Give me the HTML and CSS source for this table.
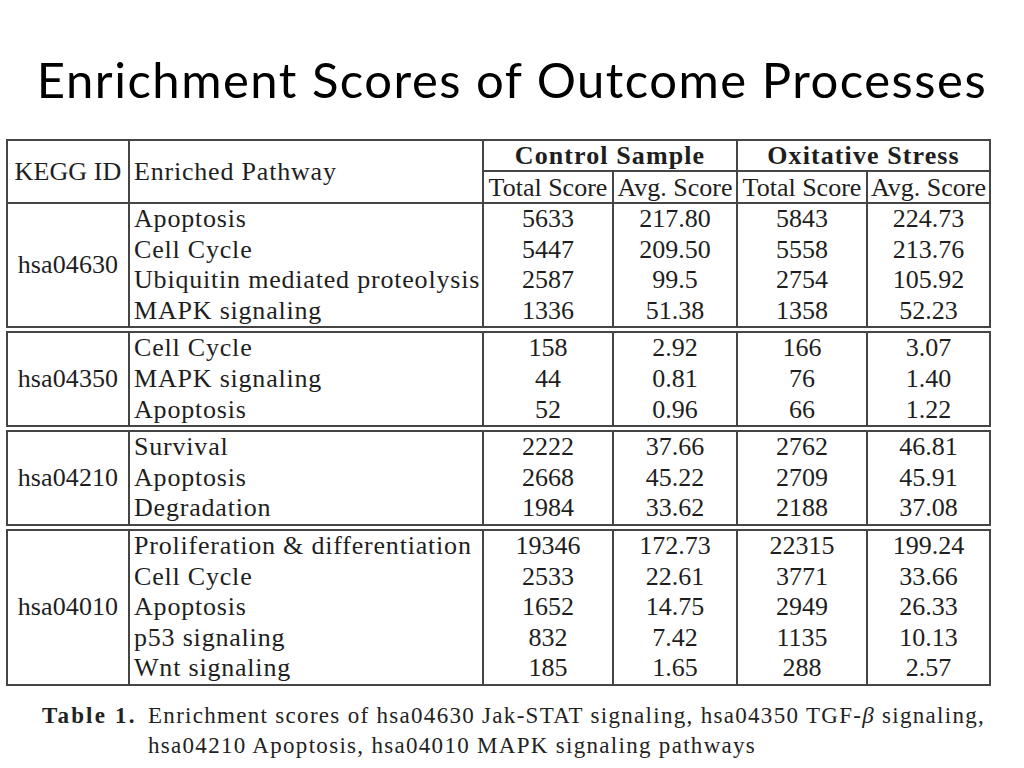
FILE: index.html
```html
<!DOCTYPE html>
<html lang="en">
<head>
<meta charset="utf-8">
<title>Enrichment Scores of Outcome Processes</title>
<link rel="stylesheet" href="styles.css">
</head>
<body>
<div class="slide">
  <h1 class="title">Enrichment Scores of Outcome Processes</h1>
  <div class="tables">
    <table class="box">
      <colgroup><col class="c1"><col class="c2"><col class="c3"><col class="c4"><col class="c5"><col class="c6"></colgroup>
      <thead>
        <tr class="hr">
          <th rowspan="2" class="id">KEGG ID</th>
          <th rowspan="2" class="path">Enriched Pathway</th>
          <th colspan="2" class="grp">Control Sample</th>
          <th colspan="2" class="grp">Oxitative Stress</th>
        </tr>
        <tr class="hr">
          <th class="sub">Total Score</th><th class="sub">Avg. Score</th><th class="sub">Total Score</th><th class="sub">Avg. Score</th>
        </tr>
      </thead>
      <tbody>
        <tr><td rowspan="4" class="id">hsa04630</td><td class="path">Apoptosis</td><td>5633</td><td>217.80</td><td>5843</td><td>224.73</td></tr>
        <tr><td class="path">Cell Cycle</td><td>5447</td><td>209.50</td><td>5558</td><td>213.76</td></tr>
        <tr><td class="path">Ubiquitin mediated proteolysis</td><td>2587</td><td>99.5</td><td>2754</td><td>105.92</td></tr>
        <tr><td class="path">MAPK signaling</td><td>1336</td><td>51.38</td><td>1358</td><td>52.23</td></tr>
      </tbody>
    </table>
    <table class="box">
      <colgroup><col class="c1"><col class="c2"><col class="c3"><col class="c4"><col class="c5"><col class="c6"></colgroup>
      <tbody>
        <tr><td rowspan="3" class="id">hsa04350</td><td class="path">Cell Cycle</td><td>158</td><td>2.92</td><td>166</td><td>3.07</td></tr>
        <tr><td class="path">MAPK signaling</td><td>44</td><td>0.81</td><td>76</td><td>1.40</td></tr>
        <tr><td class="path">Apoptosis</td><td>52</td><td>0.96</td><td>66</td><td>1.22</td></tr>
      </tbody>
    </table>
    <table class="box">
      <colgroup><col class="c1"><col class="c2"><col class="c3"><col class="c4"><col class="c5"><col class="c6"></colgroup>
      <tbody>
        <tr><td rowspan="3" class="id">hsa04210</td><td class="path">Survival</td><td>2222</td><td>37.66</td><td>2762</td><td>46.81</td></tr>
        <tr><td class="path">Apoptosis</td><td>2668</td><td>45.22</td><td>2709</td><td>45.91</td></tr>
        <tr><td class="path">Degradation</td><td>1984</td><td>33.62</td><td>2188</td><td>37.08</td></tr>
      </tbody>
    </table>
    <table class="box">
      <colgroup><col class="c1"><col class="c2"><col class="c3"><col class="c4"><col class="c5"><col class="c6"></colgroup>
      <tbody>
        <tr><td rowspan="5" class="id">hsa04010</td><td class="path">Proliferation &amp; differentiation</td><td>19346</td><td>172.73</td><td>22315</td><td>199.24</td></tr>
        <tr><td class="path">Cell Cycle</td><td>2533</td><td>22.61</td><td>3771</td><td>33.66</td></tr>
        <tr><td class="path">Apoptosis</td><td>1652</td><td>14.75</td><td>2949</td><td>26.33</td></tr>
        <tr><td class="path">p53 signaling</td><td>832</td><td>7.42</td><td>1135</td><td>10.13</td></tr>
        <tr><td class="path">Wnt signaling</td><td>185</td><td>1.65</td><td>288</td><td>2.57</td></tr>
      </tbody>
    </table>
  </div>
  <div class="caption">
    <span class="label">Table 1.</span>
    <span class="text">Enrichment scores of hsa04630 Jak-STAT signaling, hsa04350 TGF-<i>β</i> signaling,<br>hsa04210 Apoptosis, hsa04010 MAPK signaling pathways</span>
  </div>
</div>
</body>
</html>
```

FILE: styles.css
```css
html, body {
  margin: 0;
  padding: 0;
  background: #ffffff;
}

.slide {
  width: 1024px;
  height: 768px;
  display: flex;
  flex-direction: column;
  overflow: hidden;
}

.title {
  margin: 51px 0 0 0;
  font-family: "Lato", "Open Sans", sans-serif;
  font-weight: 400;
  font-size: 49px;
  line-height: 56px;
  letter-spacing: 1.5px;
  text-align: center;
  color: #000;
}

.tables {
  margin: 32px 0 0 6px;
  display: flex;
  flex-direction: column;
  gap: 3px;
}

.box {
  width: 985px;
  table-layout: fixed;
  border-collapse: collapse;
  border: 2px solid #454545;
  font-family: "Liberation Serif", "Times New Roman", serif;
  font-size: 26px;
  color: #1e1e1e;
}

.c1 { width: 122px; }
.c2 { width: 354px; }
.c3 { width: 130px; }
.c4 { width: 124px; }
.c5 { width: 130px; }
.c6 { width: 123px; }

.box th,
.box td {
  padding: 0;
  height: 30.6px;
  line-height: 30.6px;
  font-family: "Liberation Serif", "Times New Roman", serif;
  font-size: 26px;
  text-align: center;
  white-space: nowrap;
  overflow: hidden;
  border-left: 2px solid #454545;
  border-right: 2px solid #454545;
  font-weight: 400;
}

.box .hr th {
  height: 29px;
  line-height: 29px;
  border-bottom: 2px solid #454545;
}

.box .path {
  text-align: left;
  padding-left: 4px;
  letter-spacing: 0.8px;
}

.box th.grp {
  font-weight: 700;
  letter-spacing: 1.1px;
}

.box th.sub {
  padding-top: 1px;
}

.box .id {
  vertical-align: middle;
  letter-spacing: 0.1px;
}

.caption {
  margin: 15px 0 0 42px;
  display: flex;
  font-family: "Liberation Serif", "Times New Roman", serif;
  font-size: 23px;
  line-height: 30px;
  color: #222;
  letter-spacing: 1.3px;
}

.caption .label {
  flex: 0 0 106px;
  font-weight: 700;
  letter-spacing: 2.2px;
}

.caption .text {
  white-space: nowrap;
}
```
